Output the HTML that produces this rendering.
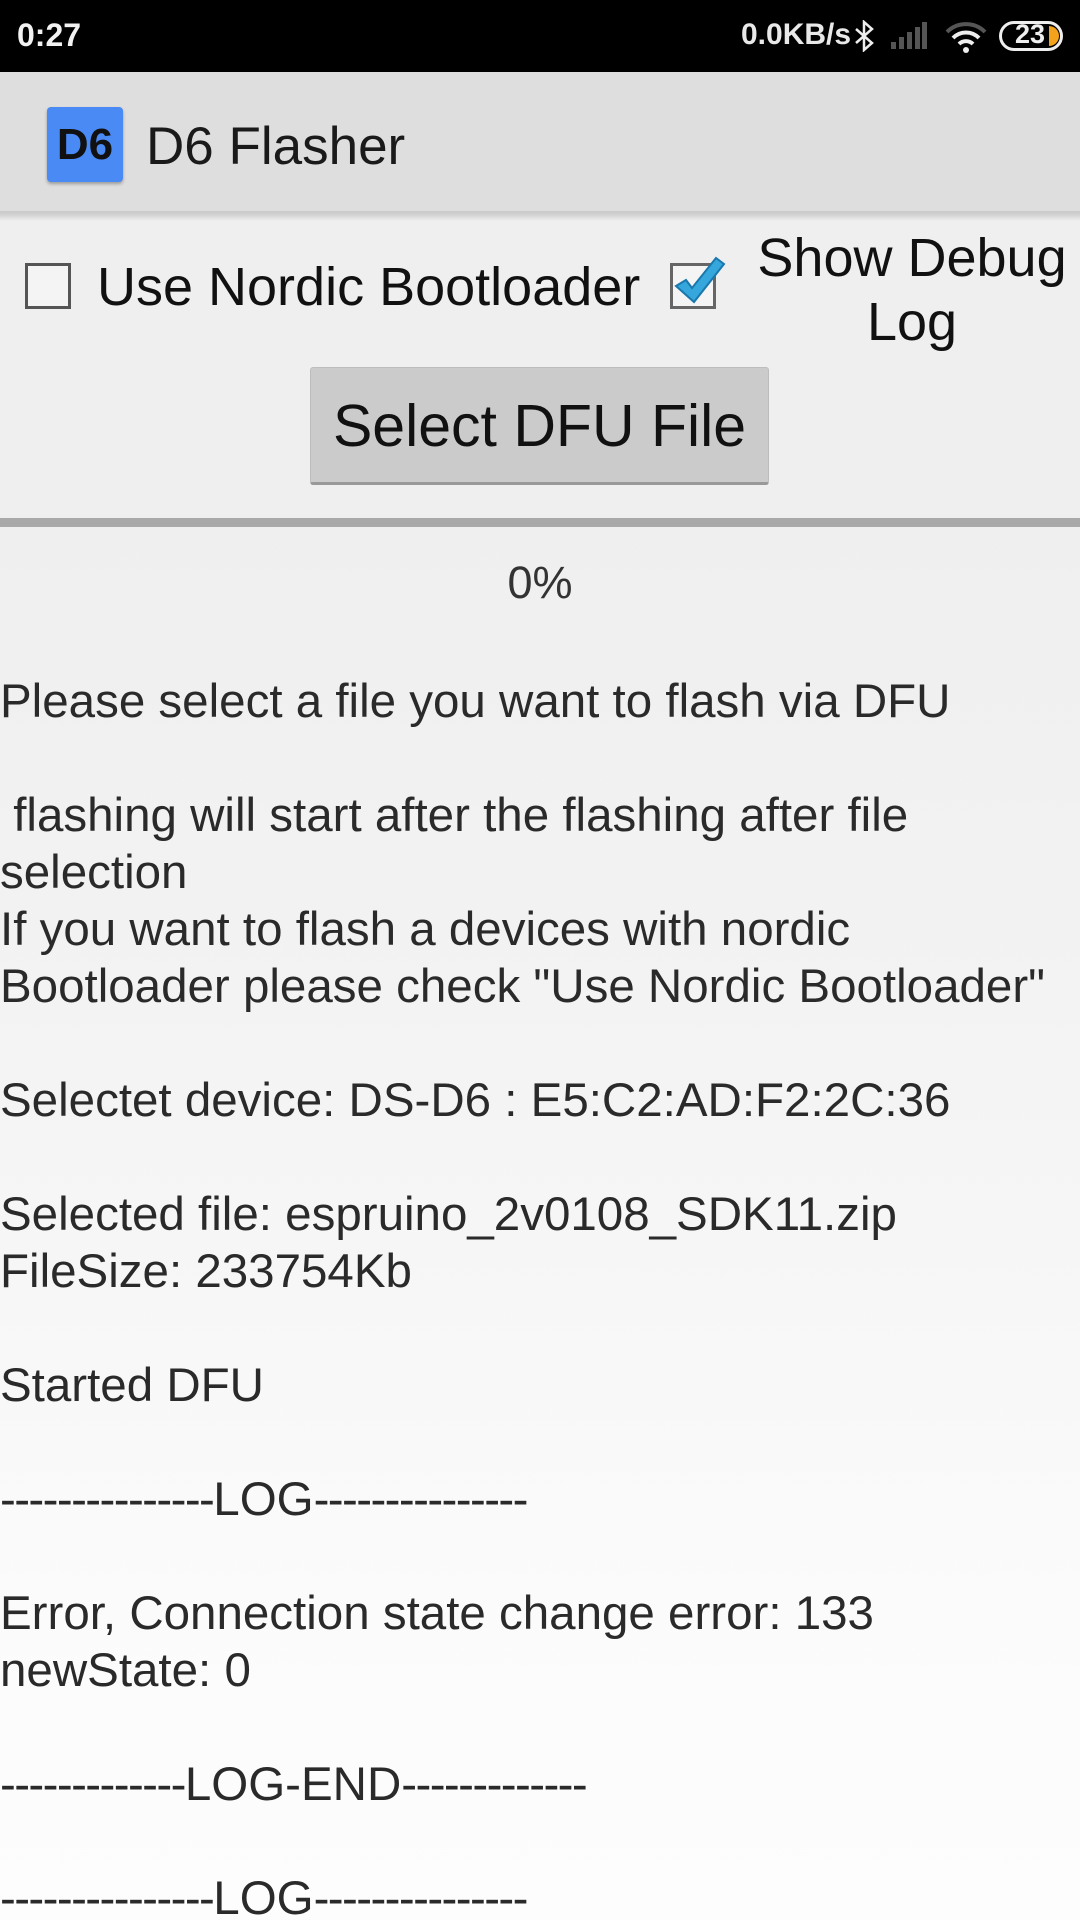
<!DOCTYPE html>
<html style="overflow:hidden;width:1080px;height:1920px"><head><meta charset="utf-8"><style>
*{margin:0;padding:0;box-sizing:border-box}
html{overflow:hidden}
body{width:1080px;height:1920px;overflow:hidden;font-family:"Liberation Sans",sans-serif;background:linear-gradient(#efefef 0px,#efefef 520px,#f3f3f3 1000px,#fbfbfb 1600px,#fdfdfd 1920px);position:relative;color:#222}
.sb{position:absolute;left:0;top:0;width:1080px;height:72px;background:#000;color:#eee}
.tb{position:absolute;left:0;top:72px;width:1080px;height:139px;background:#dedede}
.sh{position:absolute;left:0;top:211px;width:1080px;height:10px;background:linear-gradient(#c9c9c9,#d3d3d3 40%,#efefef)}
.abs{position:absolute;white-space:nowrap}
.cb{position:absolute;width:46px;height:46px;border:3px solid #555;background:#f4f4f4}
.btn{position:absolute;left:310px;top:367px;width:459px;height:118px;background:#cbcbcb;border:1px solid #bdbdbd;border-bottom:3px solid #999;border-radius:3px;font-size:59px;text-align:center;line-height:116px;color:#111}
.div{position:absolute;left:0;top:518px;width:1080px;height:9px;background:#a9a9a9}
.log{position:absolute;left:0;top:673px;width:1080px;height:1247px;overflow:hidden;font-size:47.5px;line-height:57px;white-space:pre;color:#2a2a2a}
.d{letter-spacing:-1.6px}
</style></head><body>
<div class="sb">
<div class="abs" style="left:17px;top:17px;font-size:32px;font-weight:bold;color:#f2f2f2">0:27</div>
<div class="abs" style="left:741px;top:18px;font-size:30px;font-weight:bold;color:#e8e8e8">0.0KB/s</div>
<svg class="abs" style="left:852px;top:20px" width="26" height="32" viewBox="0 0 26 32"><path d="M4 9l16 14-8 7V2l8 7L4 23" fill="none" stroke="#eee" stroke-width="2.5"/></svg>
<svg class="abs" style="left:889px;top:22px" width="40" height="28"><rect x="2" y="20" width="5" height="7" fill="#555"/><rect x="10" y="15" width="5" height="12" fill="#555"/><rect x="18" y="10" width="5" height="17" fill="#555"/><rect x="26" y="5" width="5" height="22" fill="#555"/><rect x="33" y="0" width="5" height="27" fill="#555"/></svg>
<svg class="abs" style="left:945px;top:20px" width="42" height="34" viewBox="0 0 42 34"><path d="M2 12a27 27 0 0 1 38 0" fill="none" stroke="#555" stroke-width="4"/><path d="M8 18a18 18 0 0 1 26 0M14 24a10 10 0 0 1 14 0" fill="none" stroke="#eee" stroke-width="4"/><circle cx="21" cy="30" r="3" fill="#eee"/></svg>
<div class="abs" style="left:999px;top:21px;width:64px;height:30px;border:3px solid #eee;border-radius:15px"></div>
<div class="abs" style="left:1015px;top:19px;font-size:27px;font-weight:bold;color:#eee">23</div>
<div class="abs" style="left:1049px;top:26px;width:10px;height:20px;background:#f3a21b;border-radius:0 10px 10px 0"></div>
</div>
<div class="tb">
<div class="abs" style="left:47px;top:35px;width:76px;height:75px;background:#4a8af4;border-radius:4px;box-shadow:0 2px 3px rgba(0,0,0,.3);font-size:44px;font-weight:bold;line-height:75px;text-align:center;color:#111">D6</div>
<div class="abs" style="left:146px;top:44px;font-size:53px;color:#1a1a1a">D6 Flasher</div>
</div>
<div class="sh"></div>
<div class="cb" style="left:25px;top:263px"></div>
<div class="abs" style="left:97px;top:256px;font-size:54px;color:#111">Use Nordic Bootloader</div>
<div class="cb" style="left:670px;top:263px;border-color:#666"></div>
<svg class="abs" style="left:672px;top:254px" width="56" height="56" viewBox="0 0 56 56"><path d="M4 32l10-6 6 8L44 4l8 6-30 38z" fill="#35a7dc" stroke="#1a78ad" stroke-width="2"/></svg>
<div class="abs" style="left:742px;top:226px;width:340px;text-align:center;font-size:54px;line-height:64px;color:#111;white-space:normal">Show Debug<br>Log</div>
<div class="btn">Select DFU File</div>
<div class="div"></div>
<div class="abs" style="left:0;top:557px;width:1080px;text-align:center;font-size:45px;color:#333">0%</div>
<div class="log">Please select a file you want to flash via DFU

 flashing will start after the flashing after file
selection
If you want to flash a devices with nordic
Bootloader please check "Use Nordic Bootloader"

Selectet device: DS-D6 : E5:C2:AD:F2:2C:36

Selected file: espruino_2v0108_SDK11.zip
FileSize: 233754Kb

Started DFU

<span class="d">---------------</span>LOG<span class="d">---------------</span>

Error, Connection state change error: 133
newState: 0

<span class="d">-------------</span>LOG-END<span class="d">-------------</span>

<span class="d">---------------</span>LOG<span class="d">---------------</span></div>
</body></html>
